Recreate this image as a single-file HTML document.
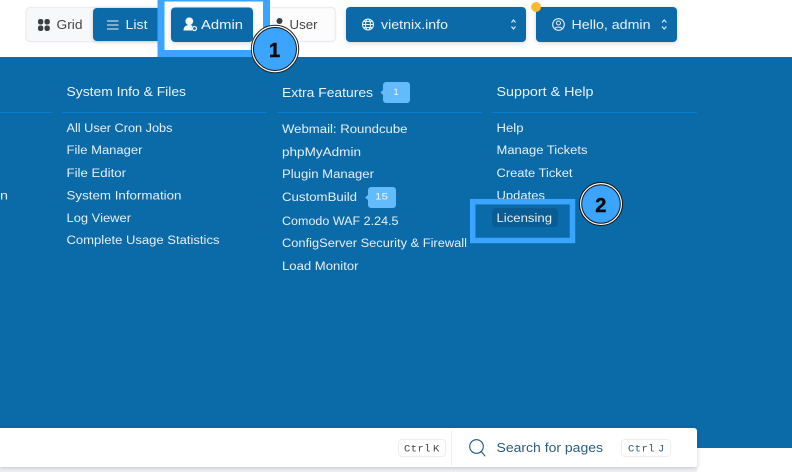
<!DOCTYPE html>
<html><head><meta charset="utf-8"><style>
html,body{margin:0;padding:0;background:#fff}
svg{display:block}
text{font-family:"Liberation Sans",sans-serif}
.m{font-family:"Liberation Mono",monospace}
</style></head><body>
<svg width="792" height="472" viewBox="0 0 792 472" xmlns="http://www.w3.org/2000/svg">
<defs>
<filter id="s" x="-10%" y="-30%" width="120%" height="170%"><feDropShadow dx="0" dy="1" stdDeviation="2" flood-color="#000" flood-opacity=".18"/></filter>
<filter id="c" x="-5%" y="-30%" width="110%" height="170%"><feDropShadow dx="0" dy="1" stdDeviation="2" flood-color="#334" flood-opacity=".25"/></filter>
</defs>
<rect width="792" height="472" fill="#fff"/>
<!-- panel -->
<rect x="0" y="57" width="792" height="391" fill="#0b6aa8"/>
<rect x="0" y="467" width="697" height="5" fill="#f0f1f4"/>
<!-- card -->
<path d="M0 428H694a3 3 0 0 1 3 3V464a3 3 0 0 1-3 3H0Z" fill="#fff" filter="url(#c)"/>
<line x1="451.500" y1="431" x2="451.500" y2="466" stroke="#eceef0"/>
<rect x="398.500" y="439.500" width="47" height="17" rx="3.500" fill="#fff" stroke="#eceef0"/>
<text class="m" x="404" y="451.500" font-size="10.500" fill="#444" textLength="26.500" lengthAdjust="spacing">Ctrl</text>
<text class="m" x="433" y="451.500" font-size="10.500" fill="#444">K</text>
<circle cx="476.500" cy="446.500" r="6.800" fill="none" stroke="#1c5a85" stroke-width="1.100"/>
<path d="M481.300 451.500l3.900 4.800" stroke="#1c5a85" stroke-width="1.100" fill="none"/>
<text x="496.500" y="452" font-size="13" fill="#2b5c7e" textLength="106.500" lengthAdjust="spacingAndGlyphs">Search for pages</text>
<rect x="621.500" y="439.500" width="49" height="17" rx="3.500" fill="#fff" stroke="#eceef0"/>
<text class="m" x="628" y="451.500" font-size="10.500" fill="#2b5c7e" textLength="26.500" lengthAdjust="spacing">Ctrl</text>
<text class="m" x="658" y="451.500" font-size="10.500" fill="#2b5c7e">J</text>

<!-- toolbar group -->
<rect x="26" y="7.500" width="309.500" height="34" rx="4" fill="#fcfcfd" stroke="#eceef1" stroke-width="1.500"/>
<rect x="27" y="8" width="70" height="33" rx="3" fill="#f7f8fa"/>
<g fill="#3a3f44"><rect x="38" y="19" width="5.300" height="5.500" rx="2.200"/><rect x="44.500" y="19" width="5.300" height="5.500" rx="2.200"/><rect x="38" y="25.500" width="5.300" height="5.500" rx="2.200"/><rect x="44.500" y="25.500" width="5.300" height="5.500" rx="2.200"/></g>
<text x="56.500" y="29" font-size="13" fill="#444" textLength="26" lengthAdjust="spacingAndGlyphs">Grid</text>
<rect x="93" y="8" width="70" height="33" rx="4" fill="#0b6aa8" filter="url(#s)"/>
<path d="M107 21h11.500M107 25h11.500M107 29h11.500" stroke="#e6f1f8" stroke-width="1.100" fill="none"/>
<text x="125.500" y="29" font-size="13" fill="#e8f2f8" textLength="22" lengthAdjust="spacingAndGlyphs">List</text>

<!-- highlight 1 -->
<rect x="161" y="-2" width="105.500" height="55.500" fill="#fff" stroke="#3ba4ff" stroke-width="7"/>
<rect x="171" y="7.500" width="82" height="34.500" rx="4" fill="#0b6aa8" filter="url(#s)"/>
<circle cx="189.300" cy="21.300" r="3.900" fill="#f2f7fb"/>
<path d="M183.500 30.500c0-3.700 2.300-5.500 5.800-5.500 1.500 0 2.500.3 3.300.8-1 1.500-1 3.200-.2 4.700Z" fill="#f2f7fb"/>
<circle cx="194.500" cy="28.500" r="2" fill="none" stroke="#f2f7fb" stroke-width="1.200"/>
<text x="201" y="29" font-size="13" fill="#f0f6fa" textLength="42" lengthAdjust="spacingAndGlyphs">Admin</text>
<circle cx="279.500" cy="21" r="3" fill="#3a3f44"/>
<path d="M275 31c0-4 2-5.500 4.500-5.500s4.500 1.500 4.500 5.500Z" fill="#3a3f44"/>
<text x="289.500" y="29" font-size="13" fill="#444" textLength="28" lengthAdjust="spacingAndGlyphs">User</text>
<circle cx="275" cy="49" r="23.700" fill="#fff" stroke="#222" stroke-width="1"/>
<circle cx="275" cy="49" r="21.500" fill="#3ba4ff" stroke="#111" stroke-width="1"/>
<text x="274.500" y="56.800" font-size="20" font-weight="700" text-anchor="middle" fill="#0a0a0a" stroke="#0a0a0a" stroke-width=".5">1</text>

<!-- domain -->
<rect x="346" y="7" width="180" height="35" rx="4" fill="#0b6aa8" filter="url(#s)"/>
<g fill="none" stroke="#e3eef6" stroke-width="1.100"><circle cx="368" cy="24.500" r="5.500"/><ellipse cx="368" cy="24.500" rx="2.500" ry="5.500"/><path d="M362.500 24.500h11M363.500 21.500h9M363.500 27.500h9"/></g>
<text x="381" y="29" font-size="13" fill="#e8f2f8" textLength="67" lengthAdjust="spacingAndGlyphs">vietnix.info</text>
<path d="M511.500 22.500l2-2.500 2 2.500M511.500 26.500l2 2.500 2-2.500" fill="none" stroke="#e3eef6" stroke-width="1.100"/>
<!-- user -->
<rect x="536" y="7" width="141" height="35" rx="4" fill="#0b6aa8" filter="url(#s)"/>
<circle cx="558.500" cy="24.500" r="5.800" fill="none" stroke="#e3eef6" stroke-width="1.100"/>
<circle cx="558.500" cy="23" r="2" fill="none" stroke="#e3eef6" stroke-width="1"/>
<path d="M555 28.500c1-1.800 6-1.800 7 0" fill="none" stroke="#e3eef6" stroke-width="1"/>
<text x="571.500" y="29" font-size="13" fill="#e8f2f8" textLength="79" lengthAdjust="spacingAndGlyphs">Hello, admin</text>
<path d="M662 22.500l2.200-2.500 2.200 2.500M662 26.500l2.200 2.500 2.200-2.500" fill="none" stroke="#e3eef6" stroke-width="1.100"/>
<circle cx="536" cy="7" r="5" fill="#fcb92c"/>

<!-- dividers -->
<g fill="#0a7cd0"><rect x="0" y="112" width="52" height="1"/><rect x="62" y="112" width="205" height="1"/><rect x="277" y="112" width="205" height="1"/><rect x="492" y="112" width="205" height="1"/></g>

<!-- headings -->
<g fill="#eaf3f9">
<text x="66.500" y="96" font-size="13" textLength="119.500" lengthAdjust="spacingAndGlyphs">System Info &amp; Files</text>
<text x="282" y="97" font-size="13" textLength="91" lengthAdjust="spacingAndGlyphs">Extra Features</text>
<text x="496.500" y="96" font-size="13" textLength="97" lengthAdjust="spacingAndGlyphs">Support &amp; Help</text>
</g>
<!-- links -->
<g fill="#e6f0f7" font-size="11.500">
<text x="0" y="199.500" textLength="8" lengthAdjust="spacingAndGlyphs">n</text>
<text x="66.500" y="132" textLength="106" lengthAdjust="spacingAndGlyphs">All User Cron Jobs</text>
<text x="66.500" y="154" textLength="76" lengthAdjust="spacingAndGlyphs">File Manager</text>
<text x="66.500" y="177" textLength="59.500" lengthAdjust="spacingAndGlyphs">File Editor</text>
<text x="66.500" y="199.500" textLength="115" lengthAdjust="spacingAndGlyphs">System Information</text>
<text x="66.500" y="222" textLength="64.500" lengthAdjust="spacingAndGlyphs">Log Viewer</text>
<text x="66.500" y="244" textLength="153" lengthAdjust="spacingAndGlyphs">Complete Usage Statistics</text>

<text x="282" y="133" textLength="125.500" lengthAdjust="spacingAndGlyphs">Webmail: Roundcube</text>
<text x="282" y="156" textLength="79" lengthAdjust="spacingAndGlyphs">phpMyAdmin</text>
<text x="282" y="178" textLength="92" lengthAdjust="spacingAndGlyphs">Plugin Manager</text>
<text x="282" y="201" textLength="75" lengthAdjust="spacingAndGlyphs">CustomBuild</text>
<text x="282" y="225" textLength="116.500" lengthAdjust="spacingAndGlyphs">Comodo WAF 2.24.5</text>
<text x="282" y="247" textLength="185" lengthAdjust="spacingAndGlyphs">ConfigServer Security &amp; Firewall</text>
<text x="282" y="270" textLength="76.500" lengthAdjust="spacingAndGlyphs">Load Monitor</text>

<text x="496.500" y="132" textLength="27" lengthAdjust="spacingAndGlyphs">Help</text>
<text x="496.500" y="154" textLength="91" lengthAdjust="spacingAndGlyphs">Manage Tickets</text>
<text x="496.500" y="177" textLength="76" lengthAdjust="spacingAndGlyphs">Create Ticket</text>
<text x="496.500" y="199.500" textLength="48.500" lengthAdjust="spacingAndGlyphs">Updates</text>
</g>
<!-- badges -->
<path d="M386 82h21a3 3 0 0 1 3 3v15a3 3 0 0 1-3 3h-21a3 3 0 0 1-3-3v-5l-2.500-2.500 2.500-2.500v-5a3 3 0 0 1 3-3Z" fill="#64bbfb"/>
<text x="396" y="95" font-size="9.500" fill="#eef7fe" text-anchor="middle">1</text>
<path d="M371 187h22a3 3 0 0 1 3 3v15a3 3 0 0 1-3 3h-22a3 3 0 0 1-3-3v-5l-3-2.500 3-2.500v-5a3 3 0 0 1 3-3Z" fill="#64bbfb"/>
<text x="381.500" y="199.500" font-size="9.500" fill="#eef7fe" text-anchor="middle" textLength="13" lengthAdjust="spacingAndGlyphs">15</text>

<!-- highlight 2 -->
<rect x="472.700" y="201.700" width="99.800" height="38.800" fill="none" stroke="#3ba4ff" stroke-width="5.500"/>
<rect x="492" y="208" width="66" height="19" rx="4" fill="#0a5c94"/>
<text x="496.500" y="222" font-size="11.500" fill="#e6f0f7" textLength="55.500" lengthAdjust="spacingAndGlyphs">Licensing</text>
<circle cx="601" cy="204" r="21.500" fill="#fff" stroke="#111" stroke-width="1"/>
<circle cx="601" cy="204" r="19.300" fill="#3ba4ff" stroke="#111" stroke-width="1"/>
<text x="600.800" y="211.800" font-size="20" font-weight="700" text-anchor="middle" fill="#0a0a0a" stroke="#0a0a0a" stroke-width=".4">2</text>
</svg>
</body></html>
